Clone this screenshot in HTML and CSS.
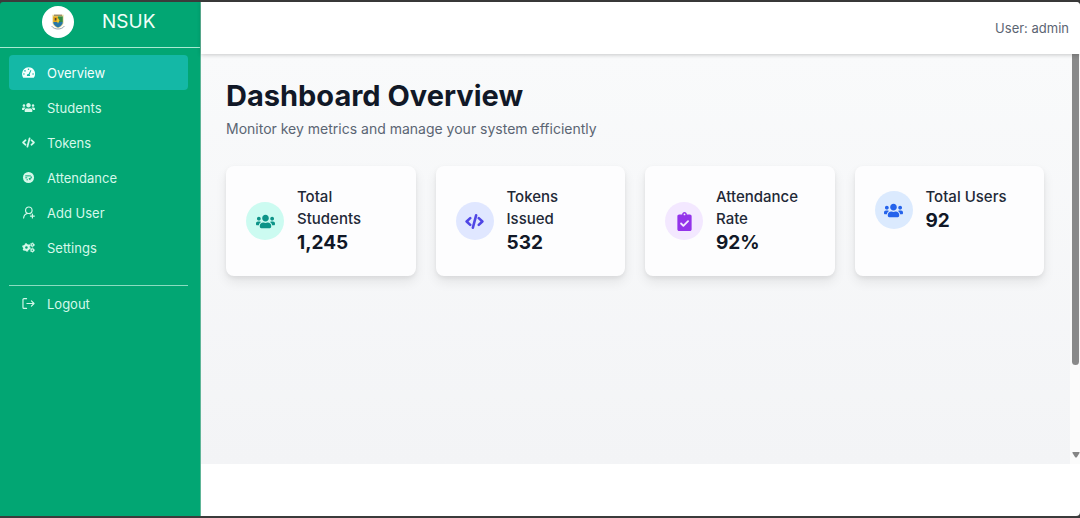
FILE: index.html
```html
<!DOCTYPE html>
<html lang="en">
<head>
<meta charset="utf-8">
<meta name="viewport" content="width=device-width, initial-scale=1">
<title>NSUK Dashboard</title>
<link rel="stylesheet" href="styles.css">
</head>
<body>
<svg class="sprite" aria-hidden="true">
  <symbol id="users" viewBox="0 0 640 512"><path fill="currentColor" d="M96 224c35.300 0 64-28.700 64-64s-28.700-64-64-64-64 28.700-64 64 28.700 64 64 64zm448 0c35.300 0 64-28.700 64-64s-28.700-64-64-64-64 28.700-64 64 28.700 64 64 64zm32 32h-64c-17.600 0-33.500 7.100-45.100 18.600 40.300 22.100 68.900 62 75.100 109.400h66c17.700 0 32-14.300 32-32v-32c0-35.300-28.700-64-64-64zm-256 0c61.900 0 112-50.100 112-112S381.900 32 320 32 208 82.100 208 144s50.100 112 112 112zm76.800 32h-8.300c-20.800 10-43.900 16-68.500 16s-47.600-6-68.500-16h-8.300C179.600 288 128 339.600 128 403.200V432c0 26.500 21.500 48 48 48h288c26.500 0 48-21.500 48-48v-28.800c0-63.600-51.600-115.200-115.200-115.200zm-223.700-13.400C161.500 263.100 145.600 256 128 256H64c-35.300 0-64 28.700-64 64v32c0 17.700 14.300 32 32 32h65.900c6.300-47.400 34.900-87.300 75.200-109.400z"/></symbol>
  <symbol id="code" viewBox="0 0 20 16"><path fill="none" stroke="currentColor" stroke-width="2.700" stroke-linecap="round" stroke-linejoin="round" d="M5.500 4.500 1.700 8l3.800 3.500M14.500 4.500l3.800 3.500-3.800 3.500M11.700 1.500l-3.400 13"/></symbol>
  <symbol id="gauge" viewBox="0 0 20 18"><path fill="currentColor" fill-rule="evenodd" d="M10 1A10 10 0 0 0 0 11c0 2 .5 3.700 1.400 5.200.3.500.7.800 1.200.8h14.800c.5 0 .9-.3 1.200-.8A10 10 0 0 0 10 1Zm0 1.800a1.200 1.200 0 1 1 0 2.400 1.200 1.200 0 0 1 0-2.400ZM4.600 5.300a1.200 1.200 0 1 1 0 2.400 1.200 1.200 0 0 1 0-2.400ZM3 10.200a1.200 1.200 0 1 1 0 2.400 1.200 1.200 0 0 1 0-2.400Zm14 0a1.200 1.200 0 1 1 0 2.400 1.200 1.200 0 0 1 0-2.400ZM13.200 5l1.200.5-2.700 6.400c.8.600 1 1.700.5 2.600H7.800c-.9-1.700.3-3.400 2.300-3.200L13.200 5Z"/></symbol>
  <symbol id="badge" viewBox="0 0 20 20"><circle cx="10" cy="10" r="8.500" fill="currentColor"/><path class="cutout" d="M5 7.500h7c3.500 0 3.500 4.500 .5 4.500H11m2-2-2 2 2 2M5 10.500h3M7 13.500h2"/></symbol>
  <symbol id="user-plus" viewBox="0 0 20 20"><path fill="none" stroke="currentColor" stroke-width="1.800" stroke-linecap="round" d="M2.500 18.500c.4-4.200 2.700-6.500 6.200-7M10.500 1.500a5 5 0 1 0 0 10 5 5 0 0 0 0-10Zm0 10 2 .5M16 12.500v6M13 15.500h6"/></symbol>
  <symbol id="gears" viewBox="0 0 22 18"><g fill="none" stroke="currentColor"><circle cx="7.500" cy="9" r="4" stroke-width="3.600"/><circle cx="7.500" cy="9" r="6" stroke-width="2.400" stroke-dasharray="3.100 3.183"/><circle cx="17.500" cy="4.500" r="2.200" stroke-width="2"/><circle cx="17.500" cy="4.500" r="3.500" stroke-width="1.200" stroke-dasharray="1.800 1.865"/><circle cx="17.500" cy="13.500" r="2.200" stroke-width="2"/><circle cx="17.500" cy="13.500" r="3.500" stroke-width="1.200" stroke-dasharray="1.800 1.865"/></g></symbol>
  <symbol id="logout" viewBox="0 0 20 18"><path fill="none" stroke="currentColor" stroke-width="1.800" stroke-linecap="round" stroke-linejoin="round" d="M7 1.500H3A1.500 1.500 0 0 0 1.500 3v12A1.500 1.500 0 0 0 3 16.500h4M7.500 9h11M14.500 5l4 4-4 4"/></symbol>
  <symbol id="clipboard" viewBox="0 0 384 512"><path fill="currentColor" d="M336 64h-80c0-35.300-28.700-64-64-64s-64 28.700-64 64H48C21.500 64 0 85.500 0 112v352c0 26.500 21.500 48 48 48h288c26.500 0 48-21.500 48-48V112c0-26.500-21.500-48-48-48zM192 40c13.300 0 24 10.700 24 24s-10.700 24-24 24-24-10.700-24-24 10.700-24 24-24z"/><path fill="none" stroke="#f3e8ff" stroke-width="50" stroke-linecap="round" stroke-linejoin="round" d="m100 310 62 62 126-126"/></symbol>
</svg>
<div class="window">
  <aside class="sidebar">
    <div class="brand">
      <span class="logo">
        <svg viewBox="0 0 20 22" role="img" aria-label="NSUK crest">
          <path fill="#e9dc9c" d="M3 2h14v9c0 4-3 6-7 8-4-2-7-4-7-8Z"/>
          <path fill="#e3a61c" d="M4 4h6v7H4Z"/><path fill="#318b48" d="M10 4h6v7h-6Z"/>
          <path fill="#2877a6" d="M4 11h12c0 3-2 5-6 7-4-2-6-4-6-7Z"/>
          <path fill="#f1c62f" d="m10 6 2 3-2 4-2-4Z"/><path fill="#5b442c" d="M5 2h10v1H5ZM6 6h2v3H6Z"/>
          <path fill="none" stroke="#83909a" d="M2 16c3 5 13 5 16 0"/>
        </svg>
      </span>
      <span class="brand-name">NSUK</span>
    </div>
    <nav class="nav">
      <a class="nav-link active" href="#overview"><svg class="icon"><use href="#gauge"/></svg>Overview</a>
      <a class="nav-link" href="#students"><svg class="icon"><use href="#users"/></svg>Students</a>
      <a class="nav-link" href="#tokens"><svg class="icon"><use href="#code"/></svg>Tokens</a>
      <a class="nav-link" href="#attendance"><svg class="icon"><use href="#badge"/></svg>Attendance</a>
      <a class="nav-link" href="#add-user"><svg class="icon"><use href="#user-plus"/></svg>Add User</a>
      <a class="nav-link" href="#settings"><svg class="icon"><use href="#gears"/></svg>Settings</a>
      <div class="nav-end">
        <a class="nav-link" href="#logout-page"><svg class="icon"><use href="#logout"/></svg>Logout</a>
      </div>
    </nav>
  </aside>
  <div class="main">
    <header class="topbar">User: admin</header>
    <div class="viewport">
      <main class="content">
        <h1 class="title">Dashboard Overview</h1>
        <p class="subtitle">Monitor key metrics and manage your system efficiently</p>
        <div class="cards">
          <section class="card"><div class="stat">
            <span class="bubble teal"><svg><use href="#users"/></svg></span>
            <div><h2 class="label">Total Students</h2><p class="value">1,245</p></div>
          </div></section>
          <section class="card"><div class="stat">
            <span class="bubble indigo"><svg><use href="#code"/></svg></span>
            <div><h2 class="label">Tokens Issued</h2><p class="value">532</p></div>
          </div></section>
          <section class="card"><div class="stat">
            <span class="bubble purple"><svg><use href="#clipboard"/></svg></span>
            <div><h2 class="label">Attendance Rate</h2><p class="value">92%</p></div>
          </div></section>
          <section class="card"><div class="stat">
            <span class="bubble blue"><svg><use href="#users"/></svg></span>
            <div><h2 class="label">Total Users</h2><p class="value">92</p></div>
          </div></section>
        </div>
      </main>
      <div class="scrollbar" aria-hidden="true">
        <span class="thumb"></span>
        <svg class="arrow" viewBox="0 0 8 6"><path fill="#858585" d="M1 0h6q1 0 .5 1L5 5q-1 1-2 0L.5 1Q0 0 1 0Z"/></svg>
      </div>
    </div>
  </div>
</div>
</body>
</html>
```
FILE: styles.css
```css
* { box-sizing: border-box; }

body {
  margin: 0;
  background: #3b3b3b;
  font-family: Inter, "Liberation Sans", sans-serif;
  font-size: 14px;
}

h1, h2, p { margin: 0; }

.sprite { position: absolute; width: 0; height: 0; }

.window {
  display: flex;
  height: 100vh;
  border: solid #3b3b3b;
  border-width: 2px 0;
}

.sidebar {
  flex: none;
  width: 201px;
  background: #02a673;
  border-right: 1px solid #5eb597;
  border-top-left-radius: 3px;
}

.brand {
  display: flex;
  align-items: center;
  gap: 28px;
  height: 46px;
  padding: 0 0 6px 42px;
  border-bottom: 1px solid #a9ead2;
  color: #f2fffa;
}

.logo {
  display: flex;
  align-items: center;
  justify-content: center;
  width: 32px;
  height: 32px;
  border-radius: 50%;
  background: #fff;
}

.logo svg { width: 16px; height: 18px; }

.brand-name { font-size: 19px; }

.nav { padding: 7px 12px 0 9px; }

.nav-link {
  display: flex;
  align-items: center;
  gap: 12px;
  height: 35px;
  padding: 0 13px;
  border-radius: 4px;
  color: #d5f8ea;
  font-size: 13px;
  text-decoration: none;
}

.nav-link.active { background: #14b8a6; color: #f4fffd; }

.icon { width: 13px; height: 13px; }

.cutout { fill: none; stroke: #02a673; stroke-width: 1.5px; }

.nav-end { margin-top: 20px; border-top: 1px solid #8adcc0; }

.main {
  flex: 1;
  display: flex;
  flex-direction: column;
  min-width: 0;
  padding-bottom: 52px;
  background: #fff;
  border-radius: 0 4px 4px 0;
}

.topbar {
  position: relative;
  display: flex;
  flex: none;
  align-items: center;
  justify-content: flex-end;
  height: 52px;
  padding: 0 11px;
  border-top-right-radius: 4px;
  background: #fff;
  box-shadow: 0 1px 4px rgba(0, 0, 0, 0.2);
  color: #5b6573;
  font-size: 13px;
}

.viewport { flex: 1; display: flex; min-height: 0; }

.content {
  flex: 1;
  min-width: 0;
  padding: 24px 26px 24px 25px;
  background: linear-gradient(#f9fafb, #f3f4f6);
}

.title {
  color: #111827;
  font-size: 29px;
  line-height: 36px;
  font-weight: 700;
}

.subtitle { margin-top: 4px; color: #5b6573; line-height: 22px; }

.cards {
  display: grid;
  grid-template-columns: repeat(4, 1fr);
  gap: 20px;
  margin-top: 26px;
}

.card {
  padding: 20px;
  border-radius: 8px;
  background: #fdfdfe;
  box-shadow: 0 6px 12px rgba(0, 0, 0, 0.08), 0 2px 4px rgba(0, 0, 0, 0.06);
}

.stat { display: flex; align-items: center; gap: 13px; }

.bubble {
  display: flex;
  flex: none;
  align-items: center;
  justify-content: center;
  width: 38px;
  height: 38px;
  border-radius: 50%;
}

.bubble svg { width: 19px; height: 19px; }

.teal { background: #ccfbf1; color: #0d9488; }
.indigo { background: #e0e7ff; color: #4f46e5; }
.purple { background: #f3e8ff; color: #9333ea; }
.blue { background: #dbeafe; color: #2563eb; }

.label { color: #1f2937; font-size: 15px; font-weight: 500; line-height: 22px; }

.value { color: #111827; font-size: 19px; font-weight: 700; line-height: 26px; }

.scrollbar {
  display: flex;
  flex: none;
  flex-direction: column;
  align-items: center;
  justify-content: space-between;
  width: 10px;
  padding: 0 1px 6px 2px;
  background: #fbfbfb;
}

.thumb { width: 7px; height: 77%; border-radius: 0 0 4px 4px; background: #8a8a8a; }

.arrow { width: 8px; height: 6px; }
```
